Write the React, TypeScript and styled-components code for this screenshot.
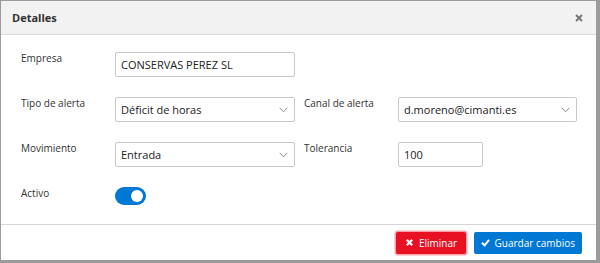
import { useState } from "react";
import styled, { createGlobalStyle } from "styled-components";

const GlobalStyle = createGlobalStyle`
  html, body {
    margin: 0;
    padding: 0;
    background: #9b9b9b;
    font-family: "Open Sans", "Liberation Sans", sans-serif;
  }
  * {
    box-sizing: border-box;
  }
`;

const Backdrop = styled.div`
  width: 600px;
  height: 263px;
  padding: 1px 4px 3px 1px;
  background: #9b9b9b;
`;

const Modal = styled.div`
  height: 100%;
  background: #fff;
  display: flex;
  flex-direction: column;
`;

const Header = styled.div`
  height: 34px;
  flex: none;
  background: #f2f2f2;
  border-bottom: 1px solid #dcdcdc;
  display: flex;
  align-items: center;
  justify-content: space-between;
  padding: 0 11px 0 11px;
`;

const Title = styled.span`
  font-size: 11px;
  font-weight: 700;
  color: #333;
`;

const CloseButton = styled.button`
  border: 0;
  background: none;
  padding: 0;
  width: 12px;
  height: 12px;
  display: flex;
  align-items: center;
  justify-content: center;
  cursor: pointer;

  svg {
    width: 8px;
    height: 8px;
  }
`;

const Body = styled.div`
  flex: 1;
  padding: 17px 0 0 20px;
  display: grid;
  grid-template-columns: 94px 189px 94px 180px;
  grid-auto-rows: 25px;
  row-gap: 20px;
  align-content: start;
`;

const Label = styled.label`
  font-size: 10px;
  color: #333;
  padding-top: 0;
  line-height: 13px;
`;

const FieldWrap = styled.div<{ $width?: number }>`
  position: relative;
  width: ${(p) => p.$width ?? 180}px;
  height: 25px;
`;

const TextInput = styled.input`
  width: 100%;
  height: 100%;
  border: 1px solid #c8c8c8;
  border-radius: 2px;
  padding: 0 5px;
  font-family: inherit;
  font-size: 11px;
  color: #222;
  background: #fff;
  outline: none;
`;

const Select = styled.select`
  width: 100%;
  height: 100%;
  border: 1px solid #c8c8c8;
  border-radius: 2px;
  padding: 0 22px 0 5px;
  font-family: inherit;
  font-size: 11px;
  color: #222;
  background: #fff;
  appearance: none;
  outline: none;
`;

const Chevron = styled.svg`
  position: absolute;
  right: 7px;
  top: 10px;
  width: 9px;
  height: 6px;
  pointer-events: none;
`;

const Toggle = styled.button<{ $on: boolean }>`
  width: 31px;
  height: 18px;
  border-radius: 9px;
  border: 0;
  padding: 0 3px;
  background: ${(p) => (p.$on ? "#0078d4" : "#c8c8c8")};
  display: flex;
  align-items: center;
  justify-content: ${(p) => (p.$on ? "flex-end" : "flex-start")};
  cursor: pointer;
  align-self: start;
`;

const Knob = styled.span`
  width: 12px;
  height: 12px;
  border-radius: 50%;
  background: #fff;
`;

const Footer = styled.div`
  height: 36px;
  flex: none;
  border-top: 1px solid #d6d6d6;
  display: flex;
  align-items: center;
  justify-content: flex-end;
  gap: 8px;
  padding: 0 14px 0 0;
`;

const Button = styled.button<{ $variant: "danger" | "primary" }>`
  height: 22px;
  border: 0;
  border-radius: 2px;
  padding: 0 ${(p) => (p.$variant === "danger" ? "8.5px" : "7px")};
  display: flex;
  align-items: center;
  gap: 5px;
  font-family: inherit;
  font-size: 10px;
  color: #fff;
  cursor: pointer;
  background: ${(p) => (p.$variant === "danger" ? "#e81123" : "#0078d4")};
  box-shadow: ${(p) =>
    p.$variant === "danger" ? "0 0 0 1.5px #f4a3ab" : "none"};

  svg {
    width: 9px;
    height: 9px;
  }
`;

const ChevronIcon = () => (
  <Chevron viewBox="0 0 9 6">
    <path d="M0.7 0.8 L4.5 4.8 L8.3 0.8" fill="none" stroke="#888" strokeWidth="1" />
  </Chevron>
);

const App = () => {
  const [active, setActive] = useState(true);

  return (
    <>
      <GlobalStyle />
      <Backdrop>
        <Modal>
          <Header>
            <Title>Detalles</Title>
            <CloseButton aria-label="Cerrar">
              <svg viewBox="0 0 8 8">
                <path d="M1 1 L7 7 M7 1 L1 7" stroke="#777" strokeWidth="2" />
              </svg>
            </CloseButton>
          </Header>
          <Body>
            <Label>Empresa</Label>
            <FieldWrap>
              <TextInput defaultValue="CONSERVAS PEREZ SL" />
            </FieldWrap>
            <span />
            <span />

            <Label>Tipo de alerta</Label>
            <FieldWrap>
              <Select defaultValue="deficit">
                <option value="deficit">Déficit de horas</option>
              </Select>
              <ChevronIcon />
            </FieldWrap>
            <Label>Canal de alerta</Label>
            <FieldWrap $width={179}>
              <Select defaultValue="mail">
                <option value="mail">d.moreno@cimanti.es</option>
              </Select>
              <ChevronIcon />
            </FieldWrap>

            <Label>Movimiento</Label>
            <FieldWrap>
              <Select defaultValue="entrada">
                <option value="entrada">Entrada</option>
              </Select>
              <ChevronIcon />
            </FieldWrap>
            <Label>Tolerancia</Label>
            <FieldWrap $width={85}>
              <TextInput defaultValue="100" />
            </FieldWrap>

            <Label>Activo</Label>
            <Toggle $on={active} onClick={() => setActive(!active)}>
              <Knob />
            </Toggle>
          </Body>
          <Footer>
            <Button $variant="danger">
              <svg viewBox="0 0 10 10">
                <path d="M2 2 L8 8 M8 2 L2 8" stroke="#fff" strokeWidth="2.4" />
              </svg>
              Eliminar
            </Button>
            <Button $variant="primary">
              <svg viewBox="0 0 10 10">
                <path d="M1 5.2 L4 8 L9 2" fill="none" stroke="#fff" strokeWidth="2.2" />
              </svg>
              Guardar cambios
            </Button>
          </Footer>
        </Modal>
      </Backdrop>
    </>
  );
};

export default App;
